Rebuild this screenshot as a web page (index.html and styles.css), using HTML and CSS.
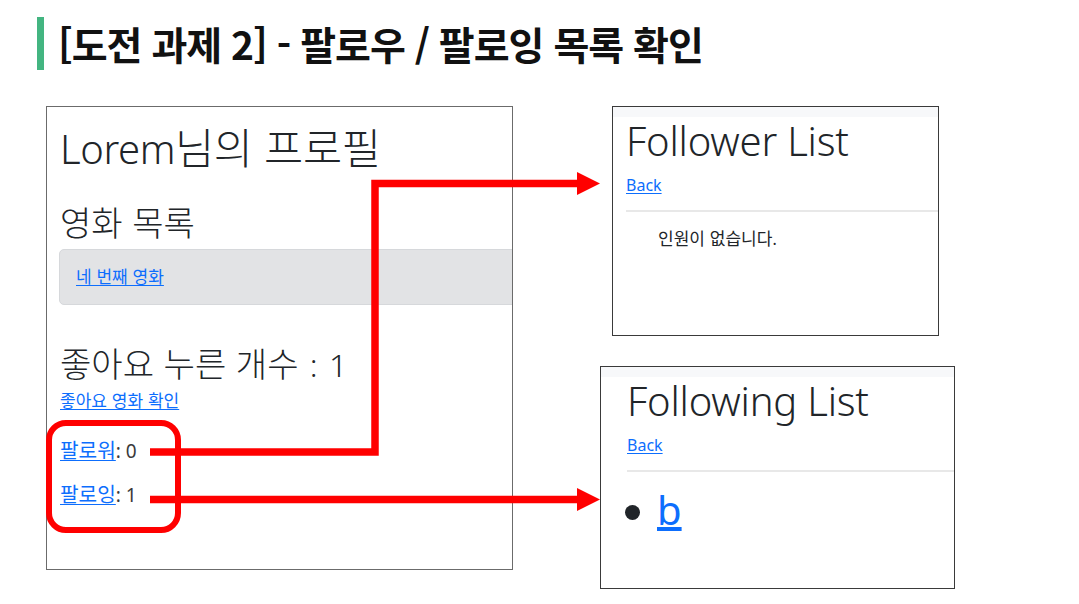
FILE: index.html
```html
<!DOCTYPE html>
<html lang="ko">
<head>
<meta charset="utf-8">
<title>[도전 과제 2] - 팔로우 / 팔로잉 목록 확인</title>
<link rel="stylesheet" href="styles.css">
</head>
<body>
<div class="page">
  <header class="title">
    <span class="title-bar"></span>
    <h1 class="title-text">[도전 과제 2] - 팔로우 / 팔로잉 목록 확인</h1>
  </header>

  <section class="shot shot-profile">
    <h1 class="p-h1">Lorem<span class="ko">님의 프로필</span></h1>
    <h2 class="p-h2 p-movies"><span class="ko">영화 목록</span></h2>
    <div class="movie-box"><a href="#" class="link"><span class="ko">네 번째 영화</span></a></div>
    <h2 class="p-h2 p-likes"><span class="ko">좋아요 누른 개수</span><span class="count"> : 1</span></h2>
    <a href="#" class="link p-likelink"><span class="ko">좋아요 영화 확인</span></a>
    <div class="p-follow p-follow-1"><a href="#" class="link"><span class="ko">팔로워</span></a>: 0</div>
    <div class="p-follow p-follow-2"><a href="#" class="link"><span class="ko">팔로잉</span></a>: 1</div>
  </section>

  <section class="shot shot-follower">
    <div class="stripe"></div>
    <div class="shot-body">
      <h1 class="l-h1">Follower List</h1>
      <a href="#" class="link l-back">Back</a>
      <hr class="l-hr">
      <p class="l-empty"><span class="ko">인원이 없습니다</span>.</p>
    </div>
  </section>

  <section class="shot shot-following">
    <div class="stripe"></div>
    <div class="shot-body">
      <h1 class="l-h1">Following List</h1>
      <a href="#" class="link l-back">Back</a>
      <hr class="l-hr">
      <ul class="l-list">
        <li class="l-item"><a href="#" class="link">b</a></li>
      </ul>
    </div>
  </section>

  <svg class="overlay" width="1079" height="604" viewBox="0 0 1079 604" xmlns="http://www.w3.org/2000/svg">
    <rect x="49" y="423" width="129" height="107" rx="17" ry="17" fill="none" stroke="#ff0000" stroke-width="6"/>
    <path d="M150 452 H375 V183.5 H580" fill="none" stroke="#ff0000" stroke-width="7.5" stroke-linejoin="miter"/>
    <polygon points="577,172 600,183.5 577,195" fill="#ff0000"/>
    <path d="M150 499.5 H580" fill="none" stroke="#ff0000" stroke-width="7.5"/>
    <polygon points="577,488 600,499.5 577,511" fill="#ff0000"/>
  </svg>
</div>
</body>
</html>
```

FILE: styles.css
```css
* { box-sizing: border-box; }

html, body {
  margin: 0;
  padding: 0;
  background: #ffffff;
}

.page {
  position: relative;
  width: 1079px;
  height: 604px;
  overflow: hidden;
  font-family: "Noto Sans", "Noto Sans CJK KR", sans-serif;
  color: #212529;
}

/* Korean runs: the original was rendered with a larger hangul face */
.ko {
  font-family: "Noto Sans CJK KR", sans-serif;
  font-size: 1.065em;
  line-height: 0;
}

/* ---------- slide title ---------- */
.title {
  display: flex;
  align-items: center;
  gap: 14px;
  padding: 17px 0 0 37px;
}

.title-bar {
  display: block;
  width: 7px;
  height: 53px;
  background: #43b581;
}

.title-text {
  margin: 0;
  font-family: "Noto Sans CJK KR", sans-serif;
  font-weight: 700;
  font-size: 39px;
  line-height: 53px;
  letter-spacing: -1px;
  color: #111111;
}

/* ---------- screenshot windows ---------- */
.shot {
  position: absolute;
  background: #ffffff;
  overflow: hidden;
}

.shot-profile {
  left: 46px;
  top: 106px;
  width: 467px;
  height: 464px;
  border: 1px solid #6b6b6b;
  padding: 18px 0 0 13px;
}

.shot-follower {
  left: 612px;
  top: 106px;
  width: 327px;
  height: 230px;
  border: 1px solid #3a3a3a;
}

.shot-following {
  left: 600px;
  top: 366px;
  width: 355px;
  height: 223px;
  border: 1px solid #3a3a3a;
}

.stripe {
  height: 10px;
  background: #f7f8fa;
}

.shot-follower .shot-body { padding-left: 13px; }
.shot-following .shot-body { padding-left: 26px; }

.link {
  color: #0d6efd;
  text-decoration: underline;
  text-underline-offset: 2px;
}

/* ---------- profile page ---------- */
.p-h1 {
  margin: 0;
  font-weight: 300;
  font-size: 40px;
  line-height: 48px;
  letter-spacing: -0.4px;
}

.p-h2 {
  margin: 0;
  font-weight: 300;
  font-size: 32px;
  line-height: 38px;
}

.p-movies { margin-top: 32px; }

.movie-box {
  width: 520px;
  margin: 6px 0 0 -1px;
  height: 56px;
  padding: 15px 16px;
  background: #e2e3e5;
  border: 1px solid #d6d8db;
  border-radius: 5px;
  font-size: 16px;
  line-height: 24px;
}

.p-likes { margin-top: 41px; }

.count { word-spacing: 3px; }

.p-likelink {
  display: block;
  margin-top: 5px;
  font-size: 16px;
  line-height: 24px;
}

.p-follow {
  font-size: 19px;
  line-height: 28px;
  color: #3a3a3a;
}

.p-follow-1 { margin-top: 24px; }
.p-follow-2 { margin-top: 16px; }

/* ---------- list pages ---------- */
.l-h1 {
  margin: 0;
  font-weight: 300;
  font-size: 40px;
  line-height: 48px;
  letter-spacing: -0.2px;
}

.l-back {
  display: inline-block;
  margin-top: 8px;
  font-size: 16px;
  line-height: 24px;
}

.l-hr {
  margin: 13px 0 0;
  border: 0;
  border-top: 2px solid #e8e8e8;
  width: 400px;
}

.l-empty {
  margin: 15px 0 0;
  padding-left: 32px;
  font-size: 16px;
  line-height: 24px;
}

.l-list {
  margin: 14px 0 0 -2px;
  padding: 0;
  list-style: none;
  font-size: 40px;
  line-height: 48px;
}

.l-item {
  display: flex;
  align-items: center;
  gap: 17px;
}

.l-item::before {
  content: "";
  width: 15px;
  height: 15px;
  margin-top: 5px;
  border-radius: 50%;
  background: #212529;
}

.overlay {
  position: absolute;
  left: 0;
  top: 0;
  pointer-events: none;
}
```
